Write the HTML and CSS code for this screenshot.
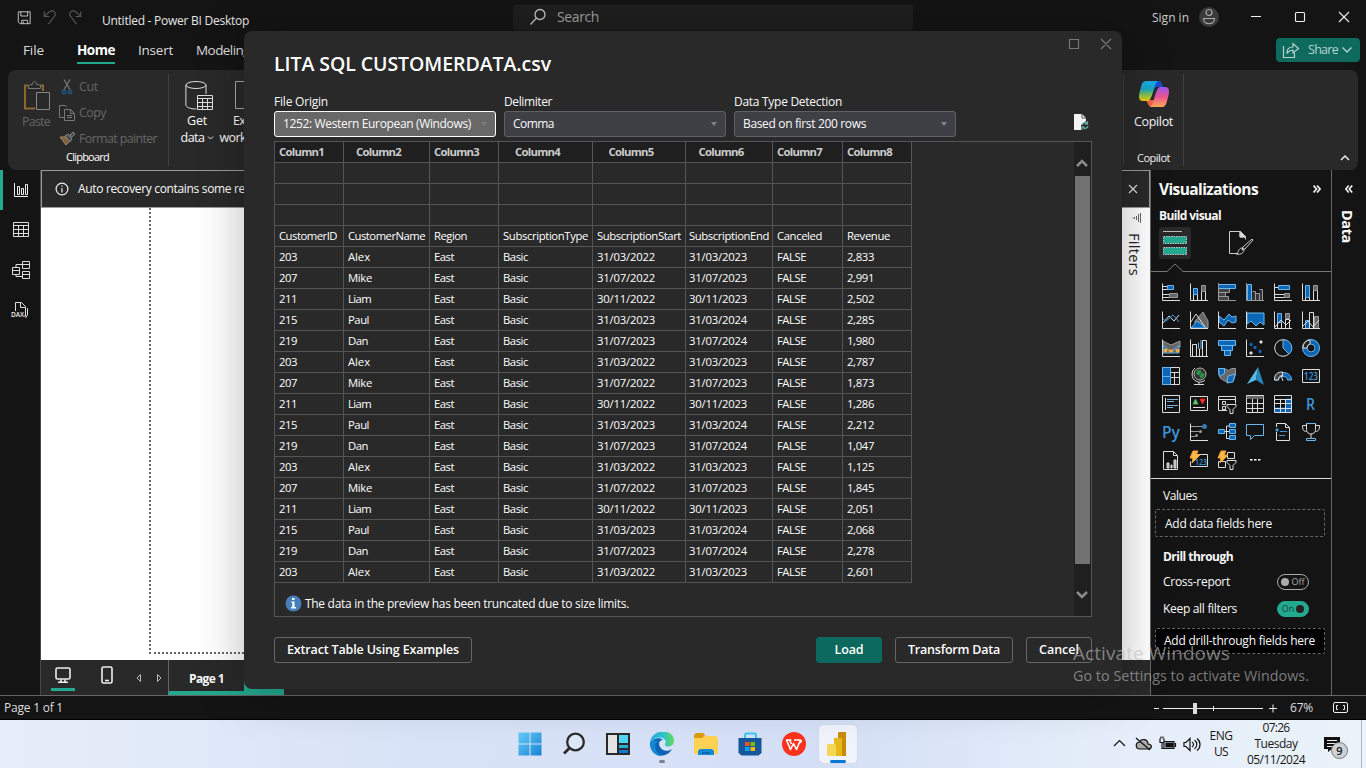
FILE: index.html
```html
<!DOCTYPE html>
<html lang="en">
<head>
<meta charset="utf-8">
<title>Untitled - Power BI Desktop</title>
<link rel="stylesheet" href="styles.css">
</head>
<body>
<div class="app">
  <header class="titlebar">
    <svg class="qat" width="100" height="22" viewBox="0 0 100 22" fill="none">
      <path stroke="#dcdcdc" d="M1.500 2.500h14v14h-12l-2-2zM4.500 2.500v5h8v-5M5.500 16.500v-4h7v4M7.500 16v-2"/>
      <g stroke="#555" stroke-width="1.300"><path d="M32 2v6h6M32.500 7.500L38 2.500C43-.5 47 4.500 44 8L37 17"/><path d="M75 2v6h-6M74.500 7.500L69 2.500C64-.5 60 4.500 63 8L70 17"/></g>
    </svg>
    <span class="doc" data-w="147">Untitled - Power BI Desktop</span>
    <div class="search">
      <svg width="18" height="18" viewBox="0 0 18 18" fill="none" stroke="#c4c4c4" stroke-width="1.300"><circle cx="11" cy="6.500" r="5"/><path d="M7.500 10L1.500 16.500"/></svg>
      <span data-w="42">Search</span>
    </div>
    <span class="signin" data-w="37">Sign in</span>
    <svg class="avatar" width="20" height="20" viewBox="0 0 20 20" fill="none" stroke="#aaa" stroke-width="1.200"><circle cx="10" cy="10" r="10" fill="#3a3a3a" stroke="none"/><circle cx="10" cy="5.500" r="3"/><path d="M4.500 11.500h11c0 7-11 7-11 0z"/></svg>
    <svg class="winbtns" width="102" height="14" viewBox="0 0 102 14" fill="none" stroke="#eee" stroke-width="1.100"><path d="M1 7.500h10M89 3l10 10M99 3L89 13"/><rect x="45.500" y="3.500" width="9" height="9" rx="1"/></svg>
  </header>

  <nav class="tabs">
    <span class="tab t-file"><span data-w="21">File</span></span>
    <span class="tab t-home on"><span data-w="38">Home</span></span>
    <span class="tab t-insert"><span data-w="35">Insert</span></span>
    <span class="tab t-model"><span data-w="54">Modeling</span></span>
    <div class="share"><svg width="18" height="18" viewBox="0 0 18 18" fill="none" stroke="#b8d4cf" stroke-width="1.200"><path d="M1.500 5v11.500h11V12M5 12c0-4 2-6 6-6V2.500l5.500 5L11 12V9c-3 0-4 1-6 3z"/></svg><span data-w="30">Share</span><svg width="10" height="8" viewBox="0 0 10 8" fill="none" stroke="#b8d4cf" stroke-width="1.300"><path d="M.5 1.500L5 6l4.500-4.500"/></svg></div>
  </nav>

  <section class="ribbon">
    <div class="group clip">
      <div class="cliprow">
        <div class="paste">
          <svg width="28" height="32" viewBox="0 0 28 32" fill="none"><path d="M5 5.500H2V28.500h10" stroke="#8c6730" stroke-width="2"/><path d="M17 5.500h3V11" stroke="#8c6730" stroke-width="2"/><path d="M5.500 8.500V5.500L8 4.500h1.500c0-4 4-4 4 0H15l2.500 1v3z" stroke="#777"/><path d="M13.500 12.500h13v17h-13z" stroke="#888" fill="#292929"/></svg>
          <span data-w="28">Paste</span>
        </div>
        <div class="cmds">
          <div><svg width="16" height="18" viewBox="0 0 16 18" fill="none" stroke="#777"><path d="M5 1.500l6 10M11 1.500L5 11.500" stroke-width="1.300"/><path d="M3.500 12.500h3v3h-3zM9.500 12.500h3v3h-3z" stroke="#245276" stroke-width="1.600"/></svg><span data-w="19">Cut</span></div>
          <div><svg width="16" height="18" viewBox="0 0 16 18" fill="none" stroke="#777"><path d="M5 13.500H.5v-12h6L8 3M5.500 5.500h6l4 4v7h-10zM11.500 5.500v4h4M8 11.500h5M8 13.500h5"/></svg><span data-w="27">Copy</span></div>
          <div><svg width="16" height="18" viewBox="0 0 16 18" fill="none"><path d="M1 7l6 8 4-4-5-4z" fill="#806034" stroke="#a28c69"/><path d="M6 6l3-2 4 5-2 3zM11 5l3-3 2 2-3 3z" fill="#4a4a4a" stroke="#888"/></svg><span data-w="78">Format painter</span></div>
        </div>
      </div>
      <div class="gname"><span data-w="43">Clipboard</span></div>
    </div>
    <div class="group data">
      <div class="big getdata">
        <svg width="28" height="32" viewBox="0 0 28 32" fill="none" stroke="#ddd"><ellipse cx="11" cy="5" rx="10" ry="3.500"/><path d="M.9 5v20c0 2 4 4 10.500 4M21 5v9"/><path d="M12.500 15.500h15v14h-15zM12.500 18.500h15M12.500 22.500h15M12.500 26.500h15M17.500 18v12M22.500 18v12"/></svg>
        <span data-w="20">Get</span><span class="dd"><span data-w="24">data</span><svg width="7" height="6" viewBox="0 0 7 6" fill="none" stroke="#eee"><path d="M1 1.500L3.500 4 6 1.500"/></svg></span>
      </div>
      <div class="big excel">
        <svg width="28" height="32" viewBox="0 0 28 32" fill="none" stroke="#aaa"><path d="M3.500 1.500h22v27h-22z"/></svg>
        <span data-w="26">Excel</span><span data-w="53">workbook</span>
      </div>
    </div>
    <div class="group copilot">
      <svg width="32" height="28" viewBox="0 0 32 28">
        <defs><linearGradient id="ca" x1="0" y1="0" x2="0" y2="1"><stop offset="0" stop-color="#1babed"/><stop offset=".4" stop-color="#18a5c0"/><stop offset=".7" stop-color="#85c250"/><stop offset="1" stop-color="#f5cc0a"/></linearGradient>
        <linearGradient id="cb" x1="0" y1="0" x2="0" y2="1"><stop offset="0" stop-color="#9b58ed"/><stop offset=".5" stop-color="#ee5594"/><stop offset="1" stop-color="#ffac55"/></linearGradient></defs>
        <path d="M15 1h6c3 0 3 3 4 6h-7l-3 4z" fill="#184cc8"/><path d="M8 20h9l-1 7h-2c-4 0-4-4-6-7z" fill="#f06445"/>
        <path d="M9 1h11c-4 1-5 19-10 20H5c-6 0-4-7-2-14 1-4 2-6 6-6z" fill="url(#ca)"/><path d="M23 27H12c4-1 5-19 10-20h5c6 0 4 7 2 14-1 4-2 6-6 6z" fill="url(#cb)"/>
      </svg>
      <span class="cp" data-w="39">Copilot</span>
      <span class="cp2" data-w="33">Copilot</span>
    </div>
    <svg class="collapse" width="10" height="8" viewBox="0 0 10 8" fill="none" stroke="#eee" stroke-width="1.500"><path d="M1 6l4-4 4 4"/></svg>
  </section>

  <main class="work">
    <aside class="rail">
      <div class="on"><svg width="20" height="20" viewBox="0 0 20 20" fill="none" stroke="#eee"><path d="M3.500 2v13.500H17M6.500 5.500h2v8h-2zM10.500 7.500h2v6h-2zM14.500 3.500h2v10h-2z"/></svg></div>
      <div><svg width="20" height="20" viewBox="0 0 20 20" fill="none" stroke="#ddd"><path d="M2.500 1.500h15v14h-15zM2 4.500h16M2 8.500h16M2 12.500h16M7.500 4v12M12.500 4v12"/></svg></div>
      <div><svg width="20" height="20" viewBox="0 0 20 20" fill="none" stroke="#ddd"><path d="M1.500 6.500h7v7h-7zM1.500 9.500h7M11.500.500h7v7h-7zM11.500 3.500h7M11.500 10.500h7v7h-7zM11.500 13.500h7M5 6V3.500h6M5 14v1.500h6"/></svg></div>
      <div><svg width="20" height="20" viewBox="0 0 20 20" fill="none" stroke="#ddd"><path d="M4.500 10V1.500h6l4 4V15H13M9.500 1.500v5h5M16.500 7v7l-2 3"/><text x="0" y="16" font-size="6.500" font-family="Open Sans, sans-serif" fill="#eee" stroke="none" font-weight="600">DAX</text></svg></div>
    </aside>
    <section class="center">
      <div class="notice"><svg width="14" height="14" viewBox="0 0 14 14" fill="none" stroke="#eee" stroke-width="1.200"><circle cx="7" cy="7" r="5.900"/><path d="M7 6v4.500M7 3.500v1.300"/></svg><span data-w="233">Auto recovery contains some recovered files</span>
        <svg class="nx" width="10" height="10" viewBox="0 0 10 10" stroke="#ddd" stroke-width="1.200"><path d="M1 1l8 8M9 1L1 9"/></svg></div>
      <div class="canvas"><div class="sheet"></div>
        <div class="filters"><svg width="10" height="10" viewBox="0 0 10 10" stroke="#666"><path d="M8.500 0v10M6.500 1v8M4.500 3v4M2.500 4v2M.5 5h1"/></svg><span data-w="43">Filters</span></div></div>
      <div class="pages">
        <span class="desk"><svg width="18" height="18" viewBox="0 0 18 18" fill="none" stroke="#eee" stroke-width="1.600"><rect x="2" y="2" width="14" height="11" rx="1.500"/><path d="M7 13.500v2.500M11 13.500v2.500M4 16.200h10"/></svg></span>
        <svg class="phone" width="12" height="18" viewBox="0 0 12 18" fill="none" stroke="#eee" stroke-width="1.600"><rect x="1" y="1" width="10" height="16" rx="1.500"/><path d="M4 14.500h4"/></svg>
        <svg class="arr" width="30" height="10" viewBox="0 0 30 10" fill="none" stroke="#bbb"><path d="M6.500 1.500v7L3 5zM23.500 1.500v7L27 5z"/></svg>
        <span class="page"><span data-w="35">Page 1</span></span><span class="add"></span>
      </div>
    </section>
    <aside class="viz">
      <div class="vh"><span data-w="99">Visualizations</span><svg width="8" height="8" viewBox="0 0 8 8" fill="none" stroke="#eee" stroke-width="1.700"><path d="M.5.5L3.500 4 .5 7.500M4 .5L7 4 4 7.500"/></svg></div>
      <div class="bv"><span data-w="62">Build visual</span></div>
      <div class="modes">
        <div class="mode on"><svg width="32" height="32" viewBox="0 0 32 32"><path d="M4 4.500h19" stroke="#bbb"/><g fill="#22a98f" stroke="#ccc" stroke-dasharray="1.500 1"><path d="M4.500 9.500h23v7h-23zM4.500 20.500h23v7h-23z"/></g></svg></div>
        <svg class="brush" width="26" height="26" viewBox="0 0 26 26" fill="none" stroke="#ccc"><path d="M10 23.500H1.500v-22h11l5 5v3M12 1v6h6"/><path d="M12 1l6 6h-6z" fill="#ddd"/><path d="M24 9l-9 8-1 3 3-1 8-9zM14 18c-4 0-3 5-6 6 5 1 8-1 8-5z"/></svg>
      </div>
      <svg class="notch" width="180" height="10" viewBox="0 0 180 10" fill="none" stroke="#777"><path d="M0 8.500h16l8-7.500 8 7.500h148"/></svg>
      <div class="icons" id="icons"></div>
      <div class="wells">
        <div class="lab"><span data-w="34">Values</span></div>
        <div class="well"><span data-w="107">Add data fields here</span></div>
        <div class="lab b"><span data-w="70">Drill through</span></div>
        <div class="opt"><span data-w="67">Cross-report</span><span class="sw"><i></i>Off</span></div>
        <div class="opt"><span data-w="74">Keep all filters</span><span class="sw on">On<i></i></span></div>
        <div class="well drill"><span data-w="151">Add drill-through fields here</span></div>
      </div>
    </aside>
    <aside class="fields"><svg width="8" height="8" viewBox="0 0 8 8" fill="none" stroke="#eee" stroke-width="1.700"><path d="M3.700.5L.8 4l2.900 3.500M7.200.5L4.300 4l2.900 3.500"/></svg><span data-w="33">Data</span></aside>
  </main>

  <footer class="status"><span data-w="59">Page 1 of 1</span>
    <svg width="124" height="16" viewBox="0 0 124 16" stroke="#eee"><path d="M0 8.500h5M9 8.500h100M59.500 6v5M115 8.500h8M119 4.500v8"/><path d="M39 3h4v11h-4z" fill="#ddd" stroke="none"/></svg>
    <span class="pct" data-w="23">67%</span>
    <svg class="fit" width="15" height="11" viewBox="0 0 15 11" fill="none" stroke="#eee"><rect x=".5" y=".5" width="14" height="10" rx="1.500"/><path d="M5 3.500H3.500v4H5M10 3.500h1.500v4H10"/></svg>
  </footer>

  <div class="taskbar">
    <div class="apps">
      <div><svg width="24" height="24" viewBox="0 0 24 24"><defs><linearGradient id="w1" x1="0" y1="0" x2="1" y2="1"><stop offset="0" stop-color="#65cdf8"/><stop offset="1" stop-color="#1982d4"/></linearGradient></defs><path d="M.5.500h11v11H.5zM12.500.500h11v11h-11zM.5 12.500h11v11H.5zM12.500 12.500h11v11h-11z" fill="url(#w1)"/></svg></div>
      <div><svg width="24" height="24" viewBox="0 0 24 24" fill="none" stroke="#2b2b2b" stroke-width="2.300"><circle cx="13.500" cy="10" r="8.300" fill="#dbe8f7"/><path d="M7.500 16L2 21.500" stroke-width="2.800"/></svg></div>
      <div><svg width="24" height="24" viewBox="0 0 24 24"><path d="M0 1h24v22H0z" fill="#2a2a2a"/><path d="M2 3h9v18H2z" fill="#e4e4e4"/><path d="M13 3h9v8h-9z" fill="#50d6fb"/><path d="M13 13h9v3h-9z" fill="#28acd8"/><path d="M13 18h9v3h-9z" fill="#0878d4"/></svg></div>
      <div class="run"><svg width="24" height="24" viewBox="0 0 24 24"><defs><linearGradient id="e1"><stop offset="0" stop-color="#26a8e8"/><stop offset=".6" stop-color="#31c7c7"/><stop offset="1" stop-color="#65db54"/></linearGradient></defs><path d="M0 11C1-4 24-4 24 9c0 6-8 7-9 4-.5-2 2-2 0-5C12 4 4 5 0 11z" fill="url(#e1)"/><path d="M0 11c3-5 10-6 13-3-4 0-5 4-3 7 2 4 8 5 12 2-5 10-22 9-22-6z" fill="#0c63b3"/><path d="M8 9c-5 3-3 13 5 15-8 1-13-6-13-13 2-3 5-3 8-2z" fill="#1687d3"/></svg></div>
      <div><svg width="24" height="24" viewBox="0 0 24 24"><path d="M0 3l2-2h7l3 3h10l2 2v15l-1 1H1l-1-1z" fill="#ffd253"/><path d="M0 3l2-2h7l2 2-3 3H0z" fill="#d99a0c"/><path d="M4 23v-4l2-2h12l2 2v4z" fill="#1588d5"/><path d="M8 20h8v1.500H8z" fill="#0861a8"/></svg></div>
      <div><svg width="24" height="24" viewBox="0 0 24 24"><path d="M7 6V2.500L8 1.500h9l1 1V6" fill="none" stroke="#38c9ee" stroke-width="2"/><path d="M.5 6h23v15l-3 2.500h-17l-3-2.500z" fill="#17579b"/><path d="M7 10h4.500v4H7z" fill="#f25022"/><path d="M12.500 10H17v4h-4.500z" fill="#7fba00"/><path d="M7 15h4.500v4H7z" fill="#00a4ef"/><path d="M12.500 15H17v4h-4.500z" fill="#ffb900"/></svg></div>
      <div><svg width="24" height="24" viewBox="0 0 24 24" fill="none"><circle cx="12" cy="12" r="12" fill="#fa321e"/><path d="M9.500 8H4.500l4 9.500 3-6 3 6L18.500 8H12M7.500 8l2 4M19.500 8l-1 3" stroke="#fff" stroke-width="1.600" stroke-linejoin="round"/></svg></div>
      <div class="act"><svg width="24" height="24" viewBox="0 0 24 24"><path d="M13 0h7v24h-8V1z" fill="#c98b05"/><path d="M8 6h7l1 1v17H8z" fill="#e7b819"/><path d="M2 12h7l1 1v11H2l-1-1V13z" fill="#f6d657"/></svg></div>
    </div>
    <div class="tray">
      <svg width="89" height="20" viewBox="0 0 89 20" fill="none" stroke="#111" stroke-width="1.200"><path d="M1 12l5.500-5.500L12 12"/><path d="M27 15h8c5 0 4-5 0-5 0-5-7-6-8-2-5 0-5 7 0 7z" fill="#aaa"/><path d="M23 4l14 12"/><path d="M51 7.500h10v7H51zM62.500 9v4M47 4.500v4h4v-4M48 4.500v-2M50 4.500v-2M49 9v5.500h2"/><path d="M53 9h7v4h-7z" fill="#111"/><path d="M71 8.500h2l4-4v12l-4-4h-2zM79 8c2 1 2 4 0 5M81.500 6c3 2 3 7 0 9M84 4.500c4 3 4 9 0 12"/></svg>
      <div class="lang"><span data-w="23">ENG</span><span data-w="14">US</span></div>
      <div class="clock"><span data-w="27">07:26</span><span data-w="43">Tuesday</span><span data-w="58">05/11/2024</span></div>
      <div class="note"><svg width="17" height="17" viewBox="0 0 17 17"><path d="M0 1h16v12H8l-4 3v-3H0z" fill="#111"/><path d="M3 4.500h10M3 7.500h10M3 10.500h6" stroke="#eee"/></svg><b>9</b></div>
      <i class="peek"></i>
    </div>
  </div>

  <div class="dialog">
    <svg class="dwin" width="44" height="12" viewBox="0 0 44 12" fill="none" stroke="#777" stroke-width="1.200"><path d="M1.500 1.500h9v9h-9zM33 1l10 10M43 1L33 11"/></svg>
    <h1><span data-w="277">LITA SQL CUSTOMERDATA.csv</span></h1>
    <div class="form">
      <label><span data-w="54">File Origin</span><div class="sel focus"><span data-w="188">1252: Western European (Windows)</span><i></i></div></label>
      <label><span data-w="48">Delimiter</span><div class="sel"><span data-w="41">Comma</span><i></i></div></label>
      <label><span data-w="108">Data Type Detection</span><div class="sel"><span data-w="123">Based on first 200 rows</span><i></i></div></label>
      <svg width="15" height="17" viewBox="0 0 15 17"><path d="M0 0h8l4 4v3L7 11v5H0z" fill="#f4f4f4"/><path d="M8 0v4h4" fill="none" stroke="#555"/><path d="M8 11c1-3 4-3 5-1.500M13.500 7v3H11M14 12c-1 3-4 3-5 1.500M8 16v-3h2.500" fill="none" stroke="#68a597" stroke-width="1.300"/></svg>
    </div>
    <div class="preview">
      <div class="pv"><div class="grid" id="grid"></div>
        <div class="trunc"><svg width="17" height="17" viewBox="0 0 17 17"><circle cx="8.500" cy="8.500" r="8" fill="#477fb9"/><path d="M7 3h2.500v2H7zM6.500 6.500h3V12H11v1.500H6V12h1.300V8H6.500z" fill="#fff"/></svg><span data-w="324">The data in the preview has been truncated due to size limits.</span></div></div>
      <div class="scroll"><svg width="12" height="10" viewBox="0 0 12 10" fill="none" stroke="#8a8a8a" stroke-width="2.600"><path d="M1 8l5-5 5 5"/></svg><i></i><svg width="12" height="10" viewBox="0 0 12 10" fill="none" stroke="#8a8a8a" stroke-width="2.600"><path d="M1 2l5 5 5-5"/></svg></div>
    </div>
    <div class="actions">
      <button class="ex"><span data-w="172">Extract Table Using Examples</span></button>
      <button class="load"><span data-w="29">Load</span></button>
      <button class="tr"><span data-w="92">Transform Data</span></button>
      <button class="ca"><span data-w="40">Cancel</span></button>
    </div>
  </div>
  <div class="activate"><div><span data-w="157">Activate Windows</span></div><p><span data-w="236">Go to Settings to activate Windows.</span></p></div>
</div>
<script src="app.js"></script>
</body>
</html>
```
FILE: styles.css
```css
* { box-sizing: border-box; }
body { margin: 0; background: #141414; overflow: hidden; }
.app { position: relative; width: 1366px; height: 768px; display: flex; flex-direction: column; overflow: hidden; background: #141414; color: #fafafa; font: 12px/16px "Open Sans", "Noto Sans", sans-serif; }
svg { display: block; flex: none; }
span { white-space: nowrap; }
[data-w] { display: inline-block; flex: none; }

.titlebar { height: 36px; flex: none; display: flex; align-items: flex-start; }
.qat { margin: 8px 0 0 17px; width: 85px; }
.doc { margin-top: 13px; width: 147px; color: #e6e6e6; }
.search { margin: 5px 0 0 264px; width: 400px; height: 25px; background: #1f1f1f; border-radius: 2px; display: flex; align-items: center; padding: 0 0 2px 16px; gap: 10px; color: #a0a0a0; font-size: 14px; }
.signin { margin: 10px 0 0 239px; color: #ccc; width: 37px; }
.avatar { margin: 7px 0 0 10px; }
.winbtns { margin: 9px 0 0 31px; }

.tabs { height: 34px; flex: none; display: flex; font-size: 13.5px; color: #ddd; }
.tab { height: 28px; padding-top: 6px; }
.tab.on { color: #fff; font-weight: 700; border-bottom: 2px solid #22a98f; }
.t-file { margin-left: 23px; } .t-home { margin-left: 33px; } .t-insert { margin-left: 23px; } .t-model { margin-left: 23px; }
.share { margin: 2px 6px 0 auto; width: 84px; height: 24px; border-radius: 4px; background: #0d6a5d; color: #b8d4cf; display: flex; align-items: center; padding-left: 6px; font-size: 12.5px; }
.share span { margin: 0 4px 0 8px; }

.ribbon { height: 100px; flex: none; margin: 0 8px; background: #292929; border-radius: 8px; display: flex; position: relative; }
.group { margin-top: 4px; height: 92px; border-right: 1px solid #404040; }
.clip { width: 161px; color: #666; font-size: 12.5px; }
.cliprow { display: flex; height: 75px; }
.paste { width: 51px; padding: 6px 0 0 15px; }
.paste span { margin: 2px 0 0 -1px; }
.cmds > div { height: 26px; display: flex; align-items: center; gap: 4px; }
.gname { padding-left: 58px; font-size: 11px; color: #fff; }
.data { display: flex; border: 0; width: 955px; font-size: 12.5px; line-height: 17px; }
.big { display: flex; flex-direction: column; align-items: center; width: 48px; padding-top: 6px; flex: none; }
.getdata { margin-left: 5px; padding-left: 1px; }
.big > span { flex: none; }
.getdata > span { margin-left: -3px; }
.dd { display: flex; align-items: center; gap: 2px; }
.copilot { width: 61px; border-left: 1px solid #404040; margin-left: -1px; display: flex; flex-direction: column; align-items: center; padding-top: 6px; font-size: 12.5px; }
.cp { margin-top: 6px; } .cp2 { margin-top: 20px; font-size: 11px; }
.collapse { margin: 84px 8px 0 auto; }

.work { height: 525px; flex: none; display: flex; }
.rail { width: 41px; border-right: 1px solid #484848; flex: none; }
.rail div { height: 40px; padding: 11px 0 0 11px; }
.rail .on { border-left: 3px solid #22a98f; padding-left: 8px; }
.center { width: 1109px; flex: none; display: flex; flex-direction: column; }
.notice { height: 38px; flex: none; border: 1px solid #9a9a9a; background: #292929; display: flex; align-items: center; padding: 0 11px 0 13px; gap: 9px; }
.nx { margin-left: auto; }
.canvas { height: 452px; flex: none; background: #fff; display: flex; }
.sheet { margin-left: 108px; width: 963px; height: 446px; border: dotted #666; border-width: 0 0 2px 2px; }
.filters { margin-left: auto; width: 28px; background: #fff; color: #222; display: flex; flex-direction: column; align-items: center; padding: 5px 4px 0 0; gap: 10px; font-size: 14.5px; font-weight: 500; }
.filters svg { margin-left: 6px; }
.filters span, .fields span { writing-mode: vertical-rl; }
.pages { height: 35px; flex: none; background: #292929; display: flex; }
.desk { width: 24px; height: 31px; margin-left: 10px; padding: 6px 0 0 3px; border-bottom: 3px solid #22a98f; }
.phone { margin: 6px 0 0 26px; }
.arr { margin: 13px 0 0 18px; width: 36px; }
.page { width: 76px; margin-left: 1px; border-left: 1px solid #666; border-bottom: 4px solid #22a98f; font-weight: 700; text-align: left; padding: 11px 0 0 20px; font-size: 12px; }
.add { width: 40px; background: #22a98f; height: 35px; }
.viz { width: 182px; flex: none; border: solid #666; border-width: 0 1px; }
.vh { height: 38px; display: flex; align-items: center; justify-content: space-between; padding: 0 10px 0 8px; font-size: 15.5px; font-weight: 700; }
.bv { padding-left: 8px; height: 19px; font-weight: 700; }
.modes { display: flex; padding-left: 8px; height: 36px; }
.mode { width: 32px; height: 32px; background: #292929; border-radius: 3px; }
.brush { margin: 3px 0 0 37px; }
.icons { display: grid; grid-template-columns: repeat(6, 28px); grid-auto-rows: 28px; padding: 10px 0 0 11px; height: 206px; border-bottom: 1px solid #ddd; }
.icons svg { overflow: visible; }
.wells { padding: 9px 6px 0 4px; }
.lab { padding-left: 8px; height: 21px; }
.lab.b { padding-top: 3px; height: 28px; margin-top: 9px; font-weight: 700; }
.well { height: 28px; border: 1px dashed #666; border-radius: 2px; padding: 6px 0 0 9px; }
.well.drill { background: #000; padding-left: 8px; height: 26px; padding-top: 4px; }
.opt { height: 27px; padding: 0 16px 0 8px; display: flex; justify-content: space-between; align-items: flex-start; }
.sw { width: 32px; height: 16px; border-radius: 8px; border: 1px solid #aaa; display: flex; align-items: center; justify-content: center; gap: 2px; font-size: 9px; color: #aaa; }
.sw i { width: 8px; height: 8px; border-radius: 50%; background: #aaa; }
.sw.on { background: #22a98f; border-color: #22a98f; color: #173f38; }
.sw.on i { background: #222; }
.fields { width: 34px; padding: 15px 0 0 9px; font-size: 14.5px; font-weight: 700; line-height: 16px; }
.fields svg { margin: 0 0 17px 4px; }
.fields span { line-height: 12px; }

.status { height: 24px; flex: none; border-top: 1px solid #666; display: flex; align-items: center; padding-left: 4px; color: #ddd; }
.status > svg:first-of-type { margin-left: 1091px; }
.pct { margin-left: 12px; } .fit { margin-left: 20px; }

.taskbar { height: 49px; flex: none; border-top: 1px solid #000; background: linear-gradient(90deg, #e6eef9 0, #d9e3f7 30%, #d4dff6 60%, #e4edf9 80%, #eaf2fa 100%); display: flex; color: #171717; }
.apps { display: flex; margin-left: 508px; }
.apps > div { width: 38px; height: 38px; margin: 5px 3px 0; display: flex; align-items: center; justify-content: center; position: relative; }
.apps > div:first-child { margin-left: 2px; width: 39px; }
.act { background: #f0f3fb; border-radius: 4px; box-shadow: 0 0 1px #aab; }
.run::after, .act::after { content: ""; position: absolute; bottom: 0; left: 11px; width: 16px; height: 3px; border-radius: 2px; background: #0878d4; }
.run::after { width: 6px; left: 16px; background: #7c828c; }
.tray { margin-left: auto; display: flex; width: 253px; }
.tray > svg { margin-top: 14px; }
.lang, .clock { display: flex; flex-direction: column; align-items: center; line-height: 16px; }
.lang { width: 38px; padding-top: 8px; }
.clock { width: 72px; }
.note { margin: 16px 0 0 12px; position: relative; width: 30px; }
.note b { position: absolute; left: 7px; top: 6px; width: 17px; height: 17px; border: 1px solid #777; border-radius: 50%; background: #cdd1d6; font: 600 11px/15px "Open Sans", sans-serif; text-align: center; }
.peek { margin-left: 7px; border-left: 1px solid #a9b5c3; }

.dialog { position: absolute; left: 244px; top: 31px; width: 878px; height: 658px; background: #292929; border-radius: 8px; box-shadow: 0 3px 48px rgba(0,0,0,.28); padding: 0 30px; }
.dwin { position: absolute; left: 824px; top: 7px; }
h1 { margin: 0; padding-top: 21px; height: 63px; font-size: 19.5px; line-height: 24px; font-weight: 600; color: #fff; }
.form { display: flex; gap: 8px; height: 47px; }
.form label > span { height: 17px; line-height: 15px; display: block; }
.form > svg { margin: 20px 0 0 110px; }
.sel { width: 222px; height: 26px; border: 1px solid #606066; background: #3f3f46; border-radius: 3px; padding: 4px 8px; display: flex; justify-content: space-between; align-items: flex-start; }
.sel i { border: solid transparent; border-width: 4px 3px 0; border-top-color: #838386; margin: 6px 0; }
.sel.focus { background: #686868; border-color: #fff; } .sel.focus i { border-top-color: #7c7c7c; }
.preview { height: 476px; border: 1px solid #555; display: flex; justify-content: space-between; }
.pv { width: 799px; }
.grid { display: grid; grid-template-columns: 69px 86px 69px 94px 93px 87px 70px 69px; grid-auto-rows: 21px; width: 637px; font-size: 11.3px; line-height: 19px; color: #fff; }
.cell { border: solid #555; border-width: 0 1px 1px 0; padding-left: 4px; }
.cell:nth-child(8n+6) { padding-left: 3px; }
.head { background: #1f1f1f; color: #ccc; font-weight: 700; }
.cell.head.mid { padding: 0 16px 0 0; text-align: center; }
.trunc { display: flex; align-items: center; gap: 3px; padding: 12px 0 0 10px; }
.scroll { width: 17px; background: #1f1f1f; display: flex; flex-direction: column; align-items: center; padding: 16px 1px 0 0; }
.scroll i { background: #727272; width: 15px; height: 388px; margin: 8px 0 26px; }
.actions { display: flex; margin-top: 20px; }
button { height: 26px; border: 1px solid #666; border-radius: 3px; background: transparent; color: #fff; font: 600 12.5px/14px "Open Sans", sans-serif; padding: 0 0 1px; }
.ex { width: 198px; } .load { width: 66px; margin-left: 344px; background: #0c695d; border-color: #0c695d; }
.tr { width: 118px; margin-left: 13px; } .ca { width: 66px; margin-left: 13px; }
.activate { position: absolute; left: 1073px; top: 641px; color: rgba(190,190,190,.62); font-size: 19px; line-height: 25px; }
.activate p { margin: 0; font-size: 14.3px; line-height: 20px; }
```
FILE: app.js
```js
const header = ["CustomerID", "CustomerName", "Region", "SubscriptionType", "SubscriptionStart", "SubscriptionEnd", "Canceled", "Revenue"];
const headerWidths = [58, 77, 33, 85, 84, 80, 45, 43];
const people = [["203", "Alex", "31/03/2022", "31/03/2023"], ["207", "Mike", "31/07/2022", "31/07/2023"], ["211", "Liam", "30/11/2022", "30/11/2023"], ["215", "Paul", "31/03/2023", "31/03/2024"], ["219", "Dan", "31/07/2023", "31/07/2024"]];
const revenue = ["2,833", "2,991", "2,502", "2,285", "1,980", "2,787", "1,873", "1,286", "2,212", "1,047", "1,125", "1,845", "2,051", "2,068", "2,278", "2,601"];
const widths = { Alex: 22, Mike: 24, Liam: 23, Paul: 21, Dan: 20 };
const cell = (text, w, cls = "") => `<div class="cell ${cls}">${text ? `<span data-w="${w}">${text}</span>` : ""}</div>`;
let html = "";
for (let i = 1; i < 9; i++) html += cell("Column" + i, 45, "head" + ([2, 4, 5, 6].includes(i) ? " mid" : ""));
for (let i = 0; i < 24; i++) html += cell("");
header.forEach((t, i) => html += cell(t, headerWidths[i]));
revenue.forEach((r, i) => {
  const p = people[i % 5];
  html += cell(p[0], 18) + cell(p[1], widths[p[1]]) + cell("East", 20) + cell("Basic", 25) + cell(p[2], 58) + cell(p[3], 58) + cell("FALSE", 29) + cell(r, 27);
});
document.getElementById("grid").innerHTML = html;

// Visual gallery: each drawing uses an 18 x 18 box.
const p = (d, stroke = "#ddd", fill = "none") => `<path d="${d}" stroke="${stroke}" fill="${fill}"/>`;
const B = "#0c67b8", L = "#6bb7ed", G = "#666", S = "#999";
const axis = p("M.5.5v17H18");
const txt = (t, x, y, s, w) => `<text x="${x}" y="${y}" font-size="${s}" font-weight="600" font-family="Open Sans, sans-serif" fill="#3a96dd" textLength="${w}" lengthAdjust="spacingAndGlyphs">${t}</text>`;
const bolt = p("M3 0h5L6 4h4L2 12l1-5H0z", "#f0a030", "#ffb84a");
const icons = [
  axis + p("M.5 3.500h5v3h-5M.5 11.500h7v3h-7") + p("M5.500 2.500h6v4h-6z", L, B) + p("M7.500 10.500h8v4h-8z", S, G),
  axis + p("M3.500 11.500h4v6h-4zM11.500 8.500h4v9h-4z") + p("M3.500 5.500h4v6h-4z", L, B) + p("M11.500 2.500h4v6h-4z", S, G),
  p("M.5 5.500h11v4H.5M.5 9.500h7v4h-7M.5 13.500h10v4H.5", S, "#444") + p("M.5 1.500h17v4H.5z", L, B) + p("M.5 0v17.500H18", S),
  p("M6.500 8.500h3v9h-3M9.500 10.500h4v7h-4M13.500 6.500h3v11h-3", S, "#333") + p("M1.500 1.500h4v16h-4z", L, B) + p("M.5 0v17.500H18", S),
  axis + p("M.5 4.500h4M.5 11.500h10v3H.5") + p("M4.500 2.500h11v4h-11z", L, B) + p("M10.500 10.500h5v4h-5z", S, G),
  axis + p("M3.500 14.500h4v3h-4zM11.500 7.500h4v10h-4z") + p("M3.500 2.500h4v12h-4z", L, B) + p("M11.500 2.500h4v5h-4z", S, G),
  axis + p("M1 12l6-7 5 5 5-6") + p("M1 8l3 2 7-6 6 7", "#3a96dd"),
  p("M5 10l8-9 5 9v7H5z", S, G) + p("M1 17L7 10l9 7z", L, B) + p("M1 11l5-8 9 13") + axis,
  p("M1 5l5 4 5-6 3 3 4-1v6l-4 1-4-3-4 6-5-4z", L, B) + axis,
  p("M1 2h17v12l-4-3-4 4-5-5-4 3z", L, B) + axis,
  p("M3.500 10.500h4v7h-4zM11.500 8.500h4v9h-4z") + p("M3.500 2.500h4v9h-4z", L, B) + p("M11.500 2.500h4v5h-4z", S, G) + p("M1 16l6-7 5 5 5-5") + axis,
  p("M3.500 9.500h4v8h-4z", L, B) + p("M12.500 5.500h4v12h-4z", S, G) + p("M7.500 1.500h4v16h-4z") + p("M1 15l5-5 5 6 6-7") + axis,
  p("M1 2l8 4 9-4v6l-9 4-8-4z", S, G) + p("M1 7c4 0 4 6 8 6s4-6 8-6v7H1z", L, B) + p("M2 10h3v3H2zM14 10h3v3h-3zM7 11h4v2H7z", "#e89126", "#ffc36b") + axis,
  axis + p("M2.500 5.500h4v12h-4zM6.500 5.500v7M9.500 9.500v8M12.500 1.500h4v16h-4z") + p("M8.500 3.500v6M11 1v9", L),
  p("M.5 1.500h17v5H.5zM3.500 6.500h11v5h-11zM6.500 11.500h6v5h-6z", L, B),
  axis + p("M4 4.500h2v2H4zM8 7.500h2v2H8zM13 11.500h2v2h-2z", B, B) + p("M14 2h2v2h-2zM4 13h2v2H4z", "#ddd", "#ddd"),
  `<circle cx="9" cy="9" r="8.300" fill="none" stroke="#ddd"/>` + p("M9 1a8 8 0 0 1 6 14L9 9z", L, B),
  `<circle cx="9" cy="9" r="6.500" fill="none" stroke="${B}" stroke-width="4"/><circle cx="9" cy="9" r="8.500" fill="none" stroke="${L}"/><circle cx="9" cy="9" r="4" fill="none" stroke="${L}"/>` + p("M1 8a8 8 0 0 1 7-7v4a4 4 0 0 0-3 4H1z", "#ddd", "#222"),
  p("M.5.500h17v17H.5zM8.500 10.500h9M8.500 5.500h9M12.500 5.500v12") + p("M.5.500h8v9h-8zM.5 9.500h8v8h-8z", L, B),
  `<circle cx="10" cy="7" r="6" fill="#333" stroke="#bbb"/>` + p("M7 4l3-1 1 2-2 3-2-1zM12 6l2 1-1 3-2 1-1-2z", "#2a944a", "#2a944a") + p("M5 1C1 4 1 12 6 14c3 2 7 1 9-1M9 15v2M4 17.500h10"),
  p("M.5 1.500h6l4 2 3-2h4v6l-2 6-6 2-7-4-2-5z", S, G) + p("M.5 1.500h6v5l-5 3zM10 9l7-2-2 8-6 1z", L, B),
  p("M12 0L1 17l9-4z", "none", "#55b8e5") + p("M12 0l6 18-8-5z", "none", "#2684b8"),
  p("M.5 13c0-10 17-10 17 0h-4c0-5-9-5-9 0z", L, B) + p("M.5 13c0-6 3-8 8-8v4c-3 0-4 1-4 4zM7 8l2 6", "#ddd", "#444"),
  p("M.5 2.500h17v13H.5z") + txt("123", 2, 12.8, 10, 14),
  p("M.5.500h17v17H.5zM3.500 3v12") + p("M5 4.500h11M5 6.500h7M5 10.500h11M5 12.500h6", "#7ab4df"),
  p("M.5 1.500h17v14H.5zM3 12.500h12") + p("M3 9l2.500-5L8 9z", "#41a553", "#6dcc79") + p("M10 4h5l-2.500 5z", "#e11", "#f44"),
  p("M9 15.500H.5v-14h17v7M.5 4.500h17M4.500 6.500h3v3h-3zM4.500 11.500h3v3h-3z") + p("M9 9.500h9v2l-3 3v4h-3v-4l-3-3z", "#ddd", "#141414"),
  p("M.5.500h17v17H.5zM1 8.500h16M1 13.500h16M6.500 4v13M11.500 4v13") + p("M1 1.500h16v2H1z", G, G),
  p("M12 4h5v4h-5zM12 9h5v4h-5zM1 13h16v4H1z", B, B) + p("M.5.500h17v17H.5zM1 4.500h16M1 8.500h16M1 13.500h16M6.500 4v13M11.500 4v13"),
  txt("R", 4, 15, 16, 9), txt("Py", 0, 15, 16, 18),
  axis + p("M1 3.500h12M1 8.500h8M1 13.500h4", "#999") + `<circle cx="14.500" cy="3.500" r="2.500" fill="#3a78b4"/><circle cx="10.500" cy="8.500" r="1.500" fill="#999"/><circle cx="6.500" cy="12.500" r="1.500" fill="#999"/>`,
  p("M6 8.500h5M8.500 3v12.500h3M8.500 3h3") + p("M.5 6.500h6v4h-6zM11.500.500h6v4h-6zM11.500 6.500h6v4h-6zM11.500 12.500h6v4h-6z", L, B),
  p("M.5 1.500h17v11h-9l-4 4v-4h-4z", L),
  p("M2.500 4V.500h9l4 4v13h-13V9M11.500.500v4h4") + p("M6 8.500h7M5 12.500h6", "#3a96dd") + `<circle cx="3" cy="7" r="1.700" fill="#3a96dd"/>`,
  p("M4.500.500h9v6c0 6-9 6-9 0zM4 2.500H.5c0 4 1 6 4 6M14 2.500h3.500c0 4-1 6-4 6M9 11v4") + p("M4 .5h10M4.500 15.500h9v2h-9z", L),
  p("M1.500.500h10l4 4v14h-14zM11.500.500v4h4") + p("M5 17v-5h2v5zM9 17v-3h1v3zM12 17V9h2v8z", "#ddd", "#aaa"),
  p("M6 3.500h11.500v12H.5v-5") + txt("123", 5, 14, 9.5, 12) + bolt,
  p("M9.500 1.500h7v6h-7zM.5 10.500h7v6h-7z") + bolt + p("M9 9.500h9v2l-3 3v4h-3v-4l-3-3z", "#ddd", "#141414"),
  p("M4 8h2.500v1.500H4zM8 8h2.500v1.500H8zM12 8h2.500v1.500H12z", "none", "#fff")
];
document.getElementById("icons").innerHTML = icons.map(s => `<svg width="19" height="19" viewBox="0 0 19 19">${s}</svg>`).join("");

// Track each label to its design width.
document.querySelectorAll("[data-w]").forEach(el => {
  const range = document.createRange();
  range.selectNodeContents(el);
  const box = range.getBoundingClientRect();
  const vertical = getComputedStyle(el).writingMode !== "horizontal-tb";
  const natural = vertical ? box.height : box.width;
  el.style.letterSpacing = ((el.dataset.w - natural) / el.textContent.length).toFixed(3) + "px";
});
```
